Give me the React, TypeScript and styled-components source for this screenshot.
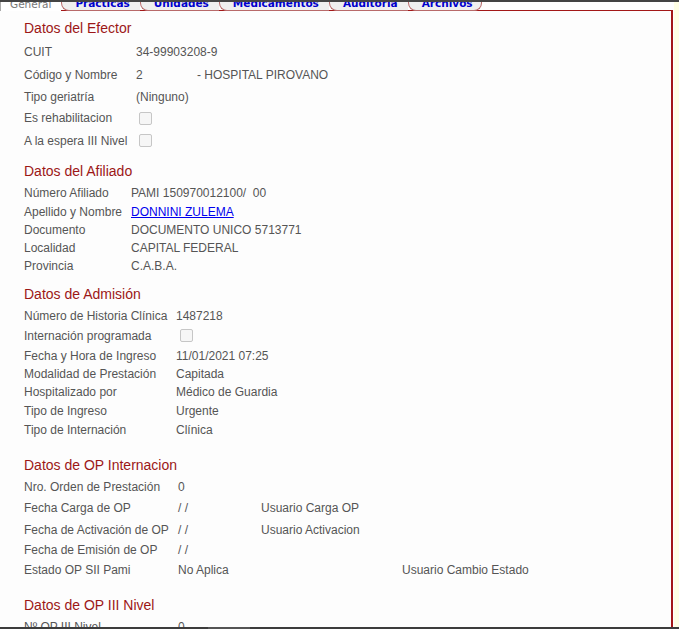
import React from "react";
import styled, { createGlobalStyle } from "styled-components";

const Global = createGlobalStyle`
  html, body { margin: 0; padding: 0; background: #ffffff; }
  body { font-family: "Liberation Sans", Arial, sans-serif; }
`;

const Page = styled.div`
  width: 679px;
  height: 629px;
  display: flex;
  flex-direction: column;
  overflow: hidden;
`;

const TopStrip = styled.div`
  height: 2px;
  flex: 0 0 2px;
  background: #444444;
`;

const BottomStrip = styled.div`
  height: 2px;
  flex: 0 0 2px;
  background: #3c3c3c;
  display: flex;
`;

const ScrollThumb = styled.div`
  margin-left: 208px;
  width: 42px;
  background: #555555;
`;

const Middle = styled.div`
  flex: 1;
  display: flex;
  overflow: hidden;
`;

const Main = styled.div`
  flex: 0 0 674px;
  display: flex;
  flex-direction: column;
  overflow: hidden;
  background: #ffffff;
`;

const Side = styled.div`
  flex: 1;
  background: #ffffe4;
`;

const TabBar = styled.div`
  display: flex;
  align-items: flex-end;
  margin-top: -14px;
  margin-bottom: -1px;
  position: relative;
  z-index: 1;
  height: 23px;
`;

const Tab = styled.div<{ $active?: boolean; $last?: boolean }>`
  box-sizing: border-box;
  height: 23px;
  display: flex;
  align-items: flex-end;
  padding: 0 ${(p) => (p.$last ? "8px" : "10px")} 1px ${(p) => (p.$active ? "9px" : "13px")};
  font-family: "DejaVu Sans", Verdana, sans-serif;
  font-size: 10.5px;
  line-height: 12px;
  font-weight: ${(p) => (p.$active ? 400 : 700)};
  color: ${(p) => (p.$active ? "#777777" : "#0000cc")};
  background: ${(p) => (p.$active ? "#ffffff" : "#efefef")};
  border-left: 1px solid ${(p) => (p.$active ? "#aaaaaa" : "#b86a6a")};
  border-right: ${(p) => (p.$last ? "1px solid #b86a6a" : "none")};
  border-bottom: ${(p) => (p.$active ? "none" : "1px solid #b86a6a")};
  border-bottom-left-radius: ${(p) => (p.$active ? "0" : "8px")};
  border-bottom-right-radius: ${(p) => (p.$last ? "8px" : "0")};
  border-top-left-radius: 8px;
  white-space: nowrap;
`;

const Panel = styled.div`
  flex: 1;
  margin-right: 1px;
  border-top: 1px solid #a31818;
  border-right: 2px solid #a31818;
  background: #fdfdfd;
  padding-left: 24px;
  display: flex;
  flex-direction: column;
`;

const Section = styled.section<{ $mt: number }>`
  margin-top: ${(p) => p.$mt}px;
  display: flex;
  flex-direction: column;
`;

const Heading = styled.h2`
  margin: 0 0 2px 0;
  height: 20px;
  line-height: 20px;
  font-size: 14px;
  font-weight: 400;
  color: #9c1717;
  font-family: "Liberation Sans", Arial, sans-serif;
`;

const Row = styled.div<{ $h: number; $cols: string }>`
  display: grid;
  grid-template-columns: ${(p) => p.$cols};
  align-items: center;
  height: ${(p) => p.$h}px;
  font-size: 12px;
  color: #555555;
  white-space: nowrap;
`;

const Cell = styled.span`
  display: flex;
  align-items: center;
`;

const CodeNum = styled.span`
  display: inline-block;
  width: 61px;
`;

const Link = styled.a`
  color: #0000ee;
  text-decoration: underline;
`;

const Check = styled.span<{ $ml: number }>`
  display: inline-block;
  box-sizing: border-box;
  width: 13px;
  height: 13px;
  margin-left: ${(p) => p.$ml}px;
  border: 1px solid #c6c6c6;
  border-radius: 2px;
  background: #f6f6f6;
`;

const tabs = ["Prácticas", "Unidades", "Medicamentos", "Auditoría", "Archivos"];

export default function App() {
  return (
    <>
      <Global />
      <Page>
        <TopStrip />
        <Middle>
          <Main>
            <TabBar>
              <Tab $active>General</Tab>
              {tabs.map((t, i) => (
                <Tab key={t} $last={i === tabs.length - 1}>
                  {t}
                </Tab>
              ))}
            </TabBar>
            <Panel>
              <Section $mt={7}>
                <Heading>Datos del Efector</Heading>
                <Row $h={24} $cols="112px auto">
                  <Cell>CUIT</Cell>
                  <Cell>34-99903208-9</Cell>
                </Row>
                <Row $h={22} $cols="112px auto">
                  <Cell>Código y Nombre</Cell>
                  <Cell>
                    <CodeNum>2</CodeNum>- HOSPITAL PIROVANO
                  </Cell>
                </Row>
                <Row $h={21} $cols="112px auto">
                  <Cell>Tipo geriatría</Cell>
                  <Cell>(Ninguno)</Cell>
                </Row>
                <Row $h={22} $cols="112px auto">
                  <Cell>Es rehabilitacion</Cell>
                  <Cell>
                    <Check $ml={3} />
                  </Cell>
                </Row>
                <Row $h={23} $cols="112px auto">
                  <Cell>A la espera III Nivel</Cell>
                  <Cell>
                    <Check $ml={3} />
                  </Cell>
                </Row>
              </Section>

              <Section $mt={9}>
                <Heading>Datos del Afiliado</Heading>
                <Row $h={20} $cols="107px auto">
                  <Cell>Número Afiliado</Cell>
                  <Cell>PAMI 150970012100/&nbsp; 00</Cell>
                </Row>
                <Row $h={18} $cols="107px auto">
                  <Cell>Apellido y Nombre</Cell>
                  <Cell>
                    <Link href="#">DONNINI ZULEMA</Link>
                  </Cell>
                </Row>
                <Row $h={18} $cols="107px auto">
                  <Cell>Documento</Cell>
                  <Cell>DOCUMENTO UNICO 5713771</Cell>
                </Row>
                <Row $h={18} $cols="107px auto">
                  <Cell>Localidad</Cell>
                  <Cell>CAPITAL FEDERAL</Cell>
                </Row>
                <Row $h={18} $cols="107px auto">
                  <Cell>Provincia</Cell>
                  <Cell>C.A.B.A.</Cell>
                </Row>
              </Section>

              <Section $mt={9}>
                <Heading>Datos de Admisión</Heading>
                <Row $h={19} $cols="152px auto">
                  <Cell>Número de Historia Clínica</Cell>
                  <Cell>1487218</Cell>
                </Row>
                <Row $h={21} $cols="152px auto">
                  <Cell>Internación programada</Cell>
                  <Cell>
                    <Check $ml={4} />
                  </Cell>
                </Row>
                <Row $h={19} $cols="152px auto">
                  <Cell>Fecha y Hora de Ingreso</Cell>
                  <Cell>11/01/2021 07:25</Cell>
                </Row>
                <Row $h={18} $cols="152px auto">
                  <Cell>Modalidad de Prestación</Cell>
                  <Cell>Capitada</Cell>
                </Row>
                <Row $h={18} $cols="152px auto">
                  <Cell>Hospitalizado por</Cell>
                  <Cell>Médico de Guardia</Cell>
                </Row>
                <Row $h={19} $cols="152px auto">
                  <Cell>Tipo de Ingreso</Cell>
                  <Cell>Urgente</Cell>
                </Row>
                <Row $h={20} $cols="152px auto">
                  <Cell>Tipo de Internación</Cell>
                  <Cell>Clínica</Cell>
                </Row>
              </Section>

              <Section $mt={15}>
                <Heading>Datos de OP Internacion</Heading>
                <Row $h={20} $cols="154px auto">
                  <Cell>Nro. Orden de Prestación</Cell>
                  <Cell>0</Cell>
                </Row>
                <Row $h={22} $cols="154px 83px auto">
                  <Cell>Fecha Carga de OP</Cell>
                  <Cell>/ /</Cell>
                  <Cell>Usuario Carga OP</Cell>
                </Row>
                <Row $h={21} $cols="154px 83px auto">
                  <Cell>Fecha de Activación de OP</Cell>
                  <Cell>/ /</Cell>
                  <Cell>Usuario Activacion</Cell>
                </Row>
                <Row $h={20} $cols="154px auto">
                  <Cell>Fecha de Emisión de OP</Cell>
                  <Cell>/ /</Cell>
                </Row>
                <Row $h={20} $cols="154px 224px auto">
                  <Cell>Estado OP SII Pami</Cell>
                  <Cell>No Aplica</Cell>
                  <Cell>Usuario Cambio Estado</Cell>
                </Row>
              </Section>

              <Section $mt={15}>
                <Heading>Datos de OP III Nivel</Heading>
                <Row $h={20} $cols="154px auto">
                  <Cell>Nº OP III Nivel</Cell>
                  <Cell>0</Cell>
                </Row>
              </Section>
            </Panel>
          </Main>
          <Side />
        </Middle>
        <BottomStrip>
          <ScrollThumb />
        </BottomStrip>
      </Page>
    </>
  );
}
